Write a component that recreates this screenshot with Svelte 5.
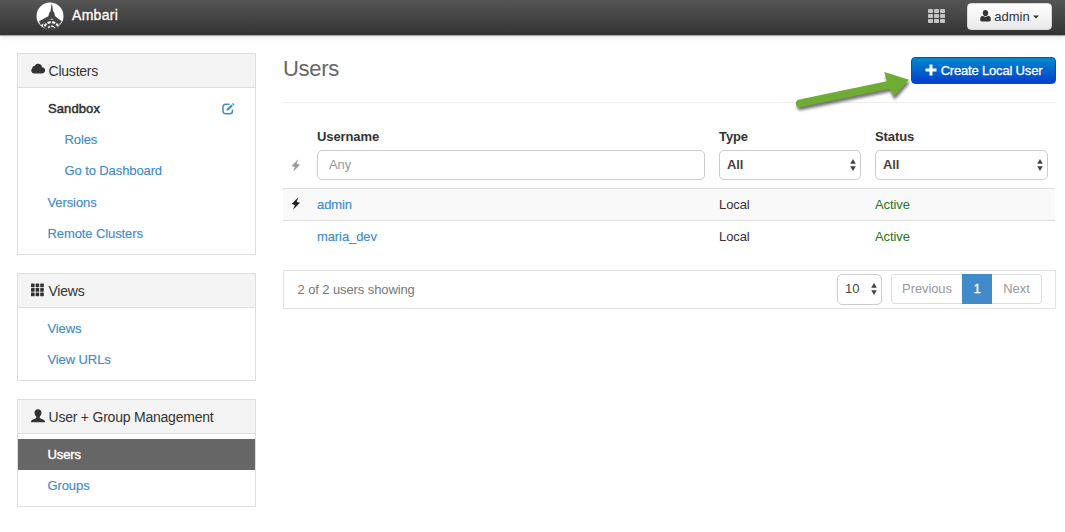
<script>
  const panels = [
    {
      title: 'Clusters',
      icon: 'cloud',
      items: [
        { label: 'Sandbox', kind: 'cluster' },
        { label: 'Roles', kind: 'sub' },
        { label: 'Go to Dashboard', kind: 'sub' },
        { label: 'Versions', kind: '' },
        { label: 'Remote Clusters', kind: '' }
      ]
    },
    {
      title: 'Views',
      icon: 'grid',
      items: [
        { label: 'Views', kind: '' },
        { label: 'View URLs', kind: '' }
      ]
    },
    {
      title: 'User + Group Management',
      icon: 'user',
      items: [
        { label: 'Users', kind: 'active' },
        { label: 'Groups', kind: '' }
      ]
    }
  ];
  const users = [
    { name: 'admin', type: 'Local', status: 'Active', admin: true },
    { name: 'maria_dev', type: 'Local', status: 'Active', admin: false }
  ];
  const cells = [0, 1, 2];
</script>

{#snippet carets()}
  <svg class="carets" width="6" height="12" viewBox="0 0 6 12"><path d="M3 0 5.8 4.8H.2zM3 12 .2 7.2h5.6z" /></svg>
{/snippet}

{#snippet bolt()}
  <svg width="10" height="13" viewBox="0 0 10 13"><path d="M7.3.2.6 6.9l3.3 1L2 12.800 9 5.700 5.700 4.800z" /></svg>
{/snippet}

<header class="navbar">
  <div class="brand">
    <svg width="28" height="28" viewBox="0 0 28 28">
      <circle cx="14" cy="14" r="13.5" fill="#fff" />
      <path d="M3 19.200 12.300 14.200l1.300-4.200.9-.6.9-6.400.4-1.200.4 1.200.9 6.400.9.600 1.200 4.200 6.500 5-1.800 2.700L15.800 16.400 4.800 23.200z" fill="#454545" />
      <path d="M6.800 24.800C7.200 15.200 23.600 15.200 24 24.800L20 28H11z" fill="#454545" />
      <path d="M8.600 24.400a7 5.600 0 0 1 13.600 0" fill="none" stroke="#fff" stroke-width="2" stroke-dasharray="3.300 1.200" />
      <path d="M12.400 25.900a3.200 2.400 0 0 1 6.200 0" fill="none" stroke="#fff" stroke-width="1.400" stroke-dasharray="2.400 .8" />
    </svg>
    <span>Ambari</span>
  </div>
  <div class="tools">
    <svg width="17" height="14" viewBox="0 0 17 14" fill="#c4c4c4">
      {#each cells as r}{#each cells as c}
        <rect x={c * 6} y={r * 5} width="5" height="4" rx=".8" />
      {/each}{/each}
    </svg>
    <button class="account">
      <svg width="11" height="12" viewBox="0 0 11 12"><path d="M5.5 0C7.3 0 8.2 1.200 8.200 3S7.100 6.300 5.500 6.300 2.800 4.800 2.800 3 3.700 0 5.500 0zM2.700 5.800c1.500 1.500 4.100 1.500 5.600 0 1.900.2 2.500 1.900 2.500 4 0 1.100-.7 1.700-1.700 1.700H1.900C.9 11.500.2 10.900.2 9.800c0-2.100.6-3.800 2.500-4z" fill="#333" /></svg>
      <span>admin</span>
      <svg width="6" height="4" viewBox="0 0 6 4"><path d="M0 .5h6L3 3.500z" fill="#333" /></svg>
    </button>
  </div>
</header>

<div class="page">
  <aside>
    {#each panels as p}
      <section class="panel">
        <h2>
          {#if p.icon === 'cloud'}
            <svg width="14" height="14" viewBox="0 0 14 14"><path d="M3 10.400A2.900 2.900 0 0 1 1.300 5.300 2.200 2.200 0 0 1 3.600 3 3.900 3.900 0 0 1 11 4.200a3.100 3.100 0 0 1 0 6.200z" /></svg>
          {:else if p.icon === 'grid'}
            <svg width="14" height="14" viewBox="0 0 14 14">
              {#each cells as r}{#each cells as c}
                <rect x={c * 4.6} y={r * 4.5 + 0.5} width="3.6" height="3.7" rx=".4" />
              {/each}{/each}
            </svg>
          {:else}
            <svg width="14" height="14" viewBox="0 0 14 14"><path d="M7 .2c2.200 0 3.500 1.300 3.500 3.200 0 1.700-.8 3.100-1.700 4.100v1.400c1.300 1 4.500 1.200 5.100 3v1.400H.1v-1.400c.6-1.800 3.800-2 5.100-3V7.500C4.300 6.500 3.500 5.100 3.500 3.400 3.500 1.500 4.800.2 7 .2z" /></svg>
          {/if}
          <span>{p.title}</span>
        </h2>
        <ul>
          {#each p.items as item}
            <li class={item.kind}>
              <span>{item.label}</span>
              {#if item.kind === 'cluster'}
                <svg width="13" height="12" viewBox="0 0 13 12" fill="none" stroke="#428bca"><path d="M7.500 1.200H3.500A2.500 2.500 0 0 0 1 3.700v4.600a2.500 2.500 0 0 0 2.500 2.500h4.400a2.500 2.500 0 0 0 2.500-2.500V6.600" stroke-width="1.500" /><path d="M4.300 8.100 5 5.700 9.300 1.400l1.600 1.600-4.300 4.300z" fill="#428bca" stroke="none" /><path d="m10.500.4 1.500 1.500" stroke-width="1.400" /></svg>
              {/if}
            </li>
          {/each}
        </ul>
      </section>
    {/each}
  </aside>

  <main>
    <div class="heading">
      <h1>Users</h1>
      <button class="create">
        <svg width="12" height="12" viewBox="0 0 12 12"><path d="M4.500.5h3v4h4v3h-4v4h-3v-4h-4v-3h4z" fill="#fff" /></svg>
        <span>Create Local User</span>
      </button>
      <svg class="arrow" width="126" height="46" viewBox="790 65 126 46">
        <path d="M799.200 99.600 886.800 81.200 884.300 72 909 79.800 893.700 96.700 889.500 88.700 800.800 107.100C795 107.900 793.900 100.900 799.200 99.600z" />
      </svg>
    </div>

    <div class="table">
      <div class="row head">
        <span class="flash muted">{@render bolt()}</span>
        <div><b>Username</b><div class="field any">Any</div></div>
        <div><b>Type</b><div class="field"><b>All</b>{@render carets()}</div></div>
        <div><b>Status</b><div class="field"><b>All</b>{@render carets()}</div></div>
      </div>
      {#each users as u}
        <div class="row" class:odd={u.admin}>
          <span class="flash">{#if u.admin}{@render bolt()}{/if}</span>
          <span class="link">{u.name}</span>
          <span>{u.type}</span>
          <span class="ok">{u.status}</span>
        </div>
      {/each}
    </div>

    <div class="footer">
      <span class="count">2 of 2 users showing</span>
      <div class="field size"><span>10</span>{@render carets()}</div>
      <div class="pager"><span class="prev">Previous</span><span class="current">1</span><span class="next">Next</span></div>
    </div>
  </main>
</div>

<style>
  :global(body) { margin: 0; background: #fff; overflow: hidden; }
  :global(#app) { font: 13px/18px "Liberation Sans", Arial, sans-serif; letter-spacing: -.1px; color: #333; }
  * { box-sizing: border-box; }
  svg { display: block; flex: none; }
  button { font: inherit; letter-spacing: inherit; display: flex; align-items: center; }
  h1, h2, ul { margin: 0; padding: 0; font-weight: normal; }
  .navbar { height: 36px; padding: 0 13px 0 36px; display: flex; justify-content: space-between; background: linear-gradient(#555, #343434 34px); border-bottom: 1px solid #a5a5a5; box-shadow: 0 1px 5px rgba(0, 0, 0, .13); }
  .brand { display: flex; align-items: flex-start; gap: 8px; color: #fff; font-size: 14px; letter-spacing: .3px; padding-top: 2px; -webkit-text-stroke: .3px #fff; }
  .brand span { padding-top: 4px; }
  .tools { display: flex; align-items: flex-start; gap: 22px; }
  .tools > svg { margin-top: 9px; }
  .account { margin-top: 3px; width: 85px; height: 27px; justify-content: center; padding: 0; gap: 3px; border: 1px solid #d8d8d8; border-radius: 4px; background: linear-gradient(#fff, #e9e9e9); color: #333; letter-spacing: 0; }
  .account > svg:first-child { position: relative; top: -1px; }
  .page { display: flex; gap: 27px; padding: 17px 9px 0 17px; }
  aside { width: 239px; display: flex; flex-direction: column; gap: 18px; }
  .panel { border: 1px solid #ddd; padding-bottom: 5px; }
  h2 { height: 34px; padding: 0 13px 1px; display: flex; align-items: center; gap: 3.5px; font-size: 14px; letter-spacing: -.22px; background: #f4f4f4; border-bottom: 1px solid #ddd; fill: #333; }
  h2 span { padding-top: 1px; }
  ul { list-style: none; padding-top: 5px; }
  li { height: 31px; display: flex; align-items: center; padding: 0 20px 0 29.5px; color: #428bca; -webkit-text-stroke: .15px; }
  li.sub { padding-left: 46.5px; }
  li.sub + li:not(.sub) { height: 32px; padding-top: 1px; }
  li.cluster { padding-left: 30px; justify-content: space-between; color: #333; -webkit-text-stroke: .5px #333; letter-spacing: .1px; }
  li.active { background: #666; color: #fff; -webkit-text-stroke: .4px #fff; }
  main { flex: 1; }
  .heading { position: relative; height: 50px; border-bottom: 1px solid #eee; display: flex; justify-content: space-between; align-items: flex-start; }
  h1 { font-size: 22px; line-height: 26px; margin-top: 3px; letter-spacing: -.3px; color: #666; }
  .create { margin-top: 4px; width: 145px; height: 27px; justify-content: center; gap: 4px; padding: 0; border: 1px solid #0050bd; border-radius: 4px; background: linear-gradient(#0088cc, #0040cc); color: #fff; letter-spacing: -.18px; -webkit-text-stroke: .3px #fff; text-shadow: 0 -1px rgba(0, 0, 0, .25); }
  .create svg { position: relative; top: -1px; }
  .arrow { position: absolute; left: 507px; top: 12px; fill: #6eac33; filter: drop-shadow(1px 3px 1.5px rgba(0, 0, 0, .55)); }
  .table { margin-top: 25px; margin-right: 1px; }
  .row { display: grid; grid-template-columns: 34px 388px 156px 187px; height: 32px; align-items: center; border-top: 1px solid #ddd; }
  .row > :nth-child(3), .row > :nth-child(4) { margin-left: 14px; }
  .head { height: 60px; border: 0; align-items: start; }
  .head > div > b { display: block; height: 22px; }
  .odd { background: #f9f9f9; }
  .flash { padding: 8px 0 0 8px; fill: #222; align-self: start; }
  .muted { padding-top: 31px; fill: #999; }
  .field { height: 30px; border: 1px solid #ccc; border-radius: 5px; display: flex; align-items: center; justify-content: space-between; padding: 0 4px 1px 7px; color: #444; }
  .any { padding-left: 11px; color: #999; }
  .carets { fill: #444; }
  .link { color: #428bca; -webkit-text-stroke: .15px; }
  .ok { color: #267329; }
  .footer { margin-top: 18px; height: 39px; border: 1px solid #e2e2e2; display: flex; align-items: flex-start; padding: 3px 13px 0; color: #777; }
  .count { flex: 1; padding: 7px 0 0 .5px; }
  .size { width: 45px; height: 31px; margin-right: 9px; }
  .pager { display: flex; height: 30px; width: 151px; line-height: 28px; text-align: center; color: #999; }
  .pager span { border: 1px solid #ddd; }
  .pager .prev { width: 71px; border-radius: 4px 0 0 4px; border-right: 0; }
  .pager .current { width: 30px; background: #428bca; border-color: #428bca; color: #fff; -webkit-text-stroke: .3px; }
  .pager .next { width: 50px; border-radius: 0 4px 4px 0; border-left: 0; }
</style>
